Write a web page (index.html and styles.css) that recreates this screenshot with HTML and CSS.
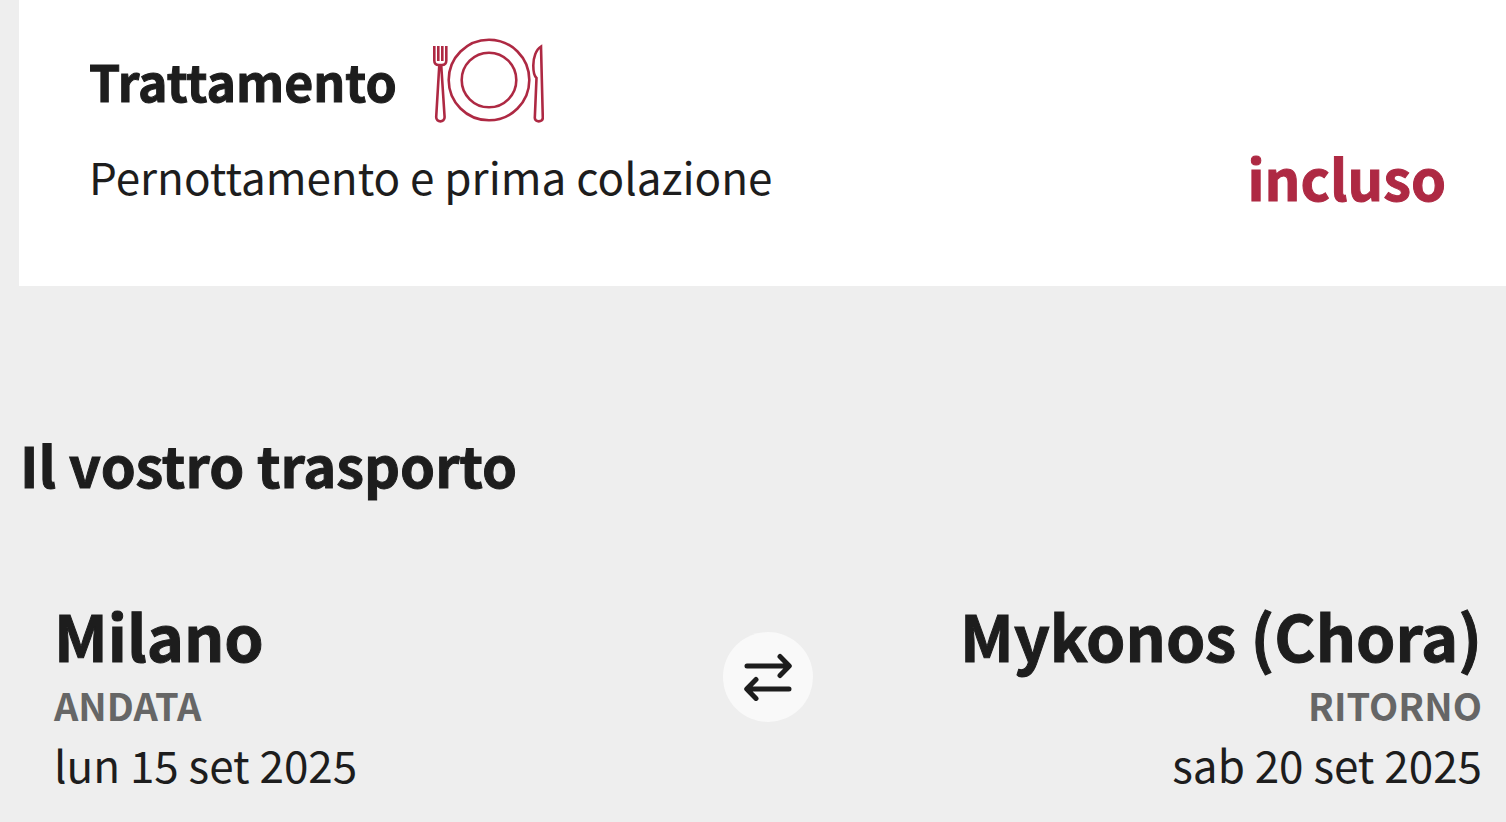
FILE: index.html
```html
<!DOCTYPE html>
<html lang="it">

<head>
    <meta charset="UTF-8" />
    <meta name="viewport" content="width=device-width, initial-scale=1.0" />
    <title>Il vostro viaggio</title>
    <link rel="stylesheet" href="styles.css">
</head>

<body>
    <section class="board">
        <div class="board-title">
            <h2>Trattamento</h2>
            <svg class="icon-meal" viewBox="0 0 112 86" aria-hidden="true">
                <circle cx="57" cy="43" r="40.3" />
                <circle cx="57" cy="43" r="27.3" />
                <path d="M2.300 9v14.500c0 3 2 4.500 4.500 4.500h3c2.500 0 4.500-1.500 4.500-4.500V9M6.300 9v15M10.300 9v15" />
                <path d="M7.300 28L4.200 80c-.2 5.800 8.600 5.800 8.400 0L9.200 28" />
                <path d="M109 9.500c-5 3-7.700 11-7.700 19 0 7 .8 10.500 3.200 12.500l-1.700 40c0 4.500 8 4.500 8 0z" />
            </svg>
        </div>
        <div class="board-row">
            <p>Pernottamento e prima colazione</p>
            <strong class="included">incluso</strong>
        </div>
    </section>

    <section class="transport">
        <h1>Il vostro trasporto</h1>
        <div class="route">
            <div class="stop">
                <h3>Milano</h3>
                <span class="direction">ANDATA</span>
                <time datetime="2025-09-15">lun 15 set 2025</time>
            </div>
            <div class="swap">
                <svg class="icon-swap" viewBox="0 0 48 48" aria-hidden="true">
                    <path d="M3 13h42M36 3.500l9.300 9.500-9.300 9.500M45 36H3M12 26.500L2.700 36l9.300 9.500" />
                </svg>
            </div>
            <div class="stop stop-return">
                <h3>Mykonos (Chora)</h3>
                <span class="direction">RITORNO</span>
                <time datetime="2025-09-20">sab 20 set 2025</time>
            </div>
        </div>
    </section>
</body>

</html>
```

FILE: styles.css
```css
body {
    margin: 0;
    background-color: #eeeeee;
    color: #1d1d1d;
    font-family: "Noto Sans CJK SC", "Open Sans", sans-serif;
}

h1,
h2,
h3,
p {
    margin: 0;
}

h1,
h2,
h3,
.included {
    -webkit-text-stroke: 1px;
}

.board {
    margin-left: 19px;
    padding: 36px 60px 58px 70px;
    background-color: white;
}

.board-title {
    display: flex;
    align-items: center;
    gap: 35px;
}

.board-title h2 {
    font-size: 50px;
    line-height: 88px;
}

.icon-meal {
    width: 112px;
    height: 86px;
    fill: none;
    stroke: #ae2943;
    stroke-width: 2.6;
}

.board-row {
    display: flex;
    justify-content: space-between;
    align-items: center;
    height: 104px;
    font-size: 44px;
}

.included {
    color: #ae2943;
    font-size: 56px;
}

.transport {
    padding: 138px 24px 32px 20px;
}

.transport h1 {
    font-size: 56px;
    line-height: 80px;
}

.route {
    display: grid;
    grid-template-columns: 1fr 90px 1fr;
    align-items: start;
    margin-top: 91px;
    padding-left: 34px;
}

.stop {
    display: flex;
    flex-direction: column;
}

.stop h3 {
    font-size: 63px;
    line-height: 80px;
}

.stop-return {
    text-align: right;
}

.direction {
    color: #666666;
    font-size: 38px;
    font-weight: bold;
    line-height: 60px;
}

.stop time {
    font-size: 44px;
    line-height: 58px;
}

.swap {
    display: flex;
    justify-content: center;
    align-items: center;
    height: 90px;
    margin-top: 37px;
    border-radius: 50%;
    background-color: #f9f9f9;
}

.icon-swap {
    width: 48px;
    height: 48px;
    fill: none;
    stroke: #1d1d1d;
    stroke-width: 5;
    stroke-linecap: round;
    stroke-linejoin: round;
}
```
